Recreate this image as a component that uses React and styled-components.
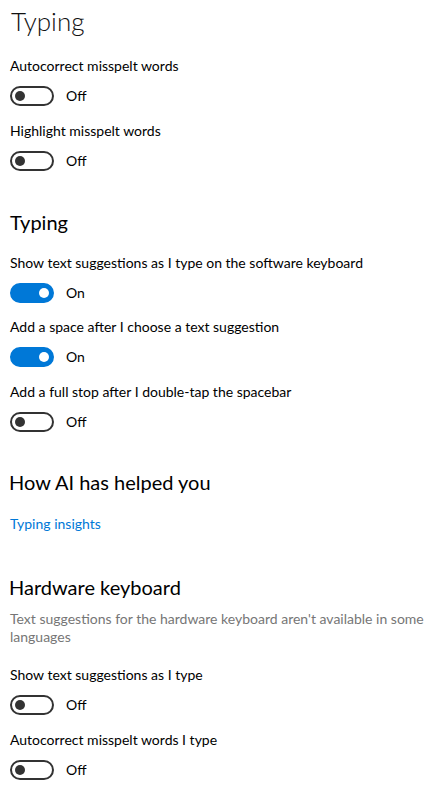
import React from "react";
import styled, { createGlobalStyle } from "styled-components";

const Global = createGlobalStyle`
  body {
    margin: 0;
    background: #fff;
    font-family: Lato, "Noto Sans", sans-serif;
    color: #000;
  }
`;

const Page = styled.div`
  padding: 1px 10px 0 10px;
  width: 442px;
  box-sizing: border-box;
`;

const Title = styled.h1`
  margin: 0 0 0 1px;
  font-size: 26px;
  font-weight: 300;
  line-height: 40px;
  color: #111;
`;

const Heading = styled.h2`
  margin: ${(p) => p.$top}px 0 0 ${(p) => p.$indent || 0}px;
  font-size: 20px;
  font-weight: 400;
  line-height: 28px;
`;

const Setting = styled.div`
  margin-top: ${(p) => p.$top}px;
`;

const Label = styled.div`
  font-size: 14px;
  line-height: 20px;
`;

const Note = styled.p`
  margin: 9px 0 0 0;
  font-size: 14px;
  line-height: 18px;
  color: #767676;
`;

const Link = styled.a`
  display: block;
  margin-top: 18px;
  font-size: 14px;
  line-height: 20px;
  color: #0078d7;
  text-decoration: none;
`;

const ToggleRow = styled.div`
  display: flex;
  align-items: center;
  gap: 12px;
  margin-top: 10px;
  height: 20px;
`;

const Track = styled.span`
  display: flex;
  align-items: center;
  box-sizing: border-box;
  width: 44px;
  height: 20px;
  border-radius: 10px;
  padding: 0 3px;
  justify-content: ${(p) => (p.$on ? "flex-end" : "flex-start")};
  background: ${(p) => (p.$on ? "#0078d7" : "#fff")};
  border: 2px solid ${(p) => (p.$on ? "#0078d7" : "#333")};
`;

const Knob = styled.span`
  width: 10px;
  height: 10px;
  border-radius: 50%;
  background: ${(p) => (p.$on ? "#fff" : "#333")};
`;

const State = styled.span`
  font-size: 14px;
  line-height: 20px;
`;

function Toggle({ label, on, top }) {
  return (
    <Setting $top={top}>
      <Label>{label}</Label>
      <ToggleRow>
        <Track $on={on}>
          <Knob $on={on} />
        </Track>
        <State>{on ? "On" : "Off"}</State>
      </ToggleRow>
    </Setting>
  );
}

export default function App() {
  return (
    <>
      <Global />
      <Page>
        <Title>Typing</Title>
        <Toggle top={15} label="Autocorrect misspelt words" on={false} />
        <Toggle top={15} label="Highlight misspelt words" on={false} />

        <Heading $top={37}>Typing</Heading>
        <Toggle top={17} label="Show text suggestions as I type on the software keyboard" on />
        <Toggle top={14} label="Add a space after I choose a text suggestion" on />
        <Toggle top={15} label="Add a full stop after I double-tap the spacebar" on={false} />

        <Heading $top={36} $indent={-1}>How AI has helped you</Heading>
        <Link href="#">Typing insights</Link>

        <Heading $top={39} $indent={-1}>Hardware keyboard</Heading>
        <Note>
          Text suggestions for the hardware keyboard aren't available in some
          languages
        </Note>
        <Toggle top={19} label="Show text suggestions as I type" on={false} />
        <Toggle top={15} label="Autocorrect misspelt words I type" on={false} />
      </Page>
    </>
  );
}
